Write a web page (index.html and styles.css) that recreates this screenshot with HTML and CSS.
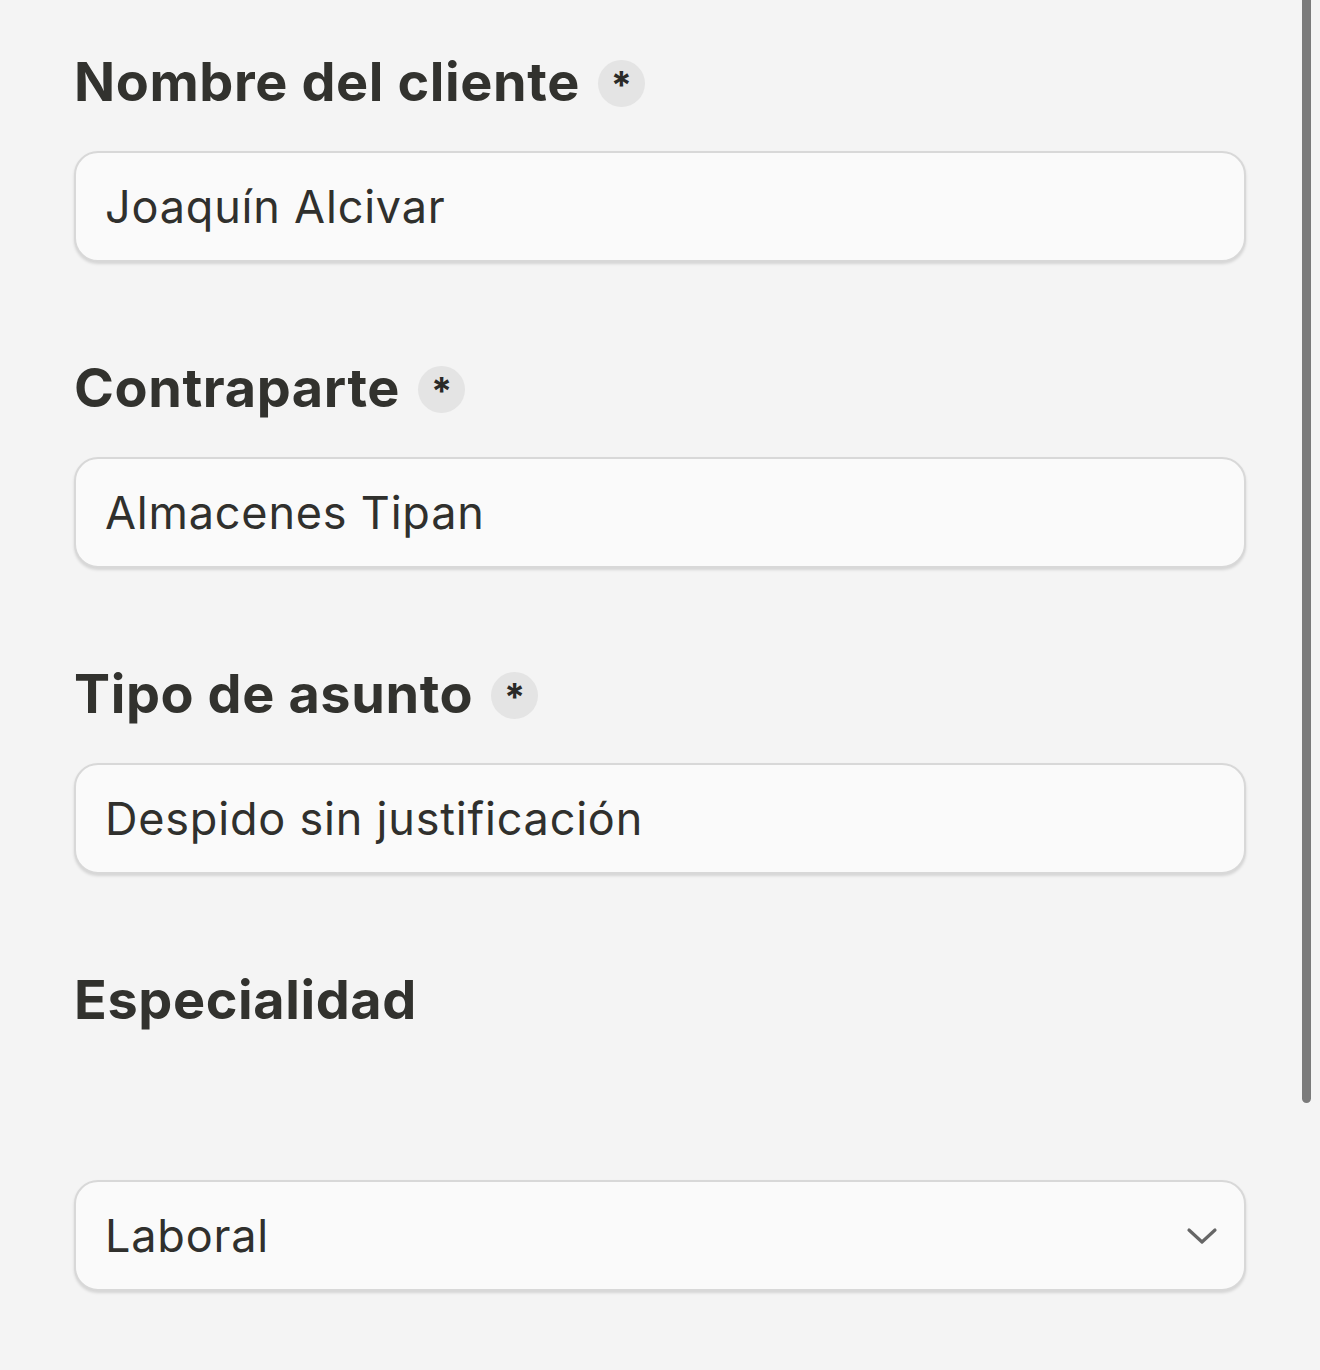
FILE: index.html
```html
<!DOCTYPE html>
<html lang="es">
<head>
<meta charset="utf-8">
<title>Formulario</title>
<link rel="stylesheet" href="styles.css">
</head>
<body>
<main class="form">
  <div class="field">
    <div class="label-row"><span class="label">Nombre del cliente</span><span class="req">*</span></div>
    <div class="input"><span class="value">Joaquín Alcivar</span></div>
  </div>
  <div class="field">
    <div class="label-row"><span class="label">Contraparte</span><span class="req">*</span></div>
    <div class="input"><span class="value">Almacenes Tipan</span></div>
  </div>
  <div class="field">
    <div class="label-row"><span class="label">Tipo de asunto</span><span class="req">*</span></div>
    <div class="input"><span class="value">Despido sin justificación</span></div>
  </div>
  <div class="field field-select">
    <div class="label-row"><span class="label">Especialidad</span></div>
    <div class="input select">
      <span class="value">Laboral</span>
      <svg class="chevron" width="32" height="18" viewBox="0 0 32 18" aria-hidden="true"><path d="M3 3 L16 15 L29 3" fill="none" stroke="#666" stroke-width="3.2" stroke-linecap="round" stroke-linejoin="round"/></svg>
    </div>
  </div>
</main>
<div class="scrollbar"></div>
</body>
</html>
```
FILE: styles.css
```css
html, body {
  margin: 0;
  padding: 0;
  background: #f4f4f4;
}
body {
  font-family: Inter, "Noto Sans", sans-serif;
  color: #2f2f2b;
  min-height: 1370px;
}
.form {
  padding: 50px 74px 0 74px;
}
.field {
  margin-bottom: 94px;
}
.label-row {
  display: flex;
  align-items: center;
  gap: 18px;
  height: 64px;
  margin-bottom: 37px;
}
.label {
  font-size: 54px;
  line-height: 64px;
  font-weight: 700;
  color: #32322e;
  letter-spacing: 0.6px;
}
.req {
  width: 47px;
  height: 47px;
  border-radius: 50%;
  background: #e4e4e4;
  display: flex;
  justify-content: center;
  align-items: flex-start;
  font-size: 38px;
  font-weight: 700;
  line-height: 50px;
  color: #2a2a28;
  margin-top: 2px;
}
.input {
  box-sizing: border-box;
  height: 111px;
  border: 2px solid #d8d8d8;
  border-radius: 24px;
  background: #fafafa;
  box-shadow: 0 2px 3px rgba(0, 0, 0, 0.13);
  display: flex;
  align-items: center;
  padding: 0 26px 0 29px;
}
.value {
  font-size: 45px;
  letter-spacing: 0.8px;
  color: #30302d;
}
.field-select .label-row {
  margin-bottom: 148px;
}
.select {
  justify-content: space-between;
}
.chevron {
  display: block;
}
.scrollbar {
  position: absolute;
  top: 0;
  left: 1302px;
  width: 9px;
  height: 1103px;
  background: #7b7b7b;
  border-radius: 0 0 5px 5px;
}
```
